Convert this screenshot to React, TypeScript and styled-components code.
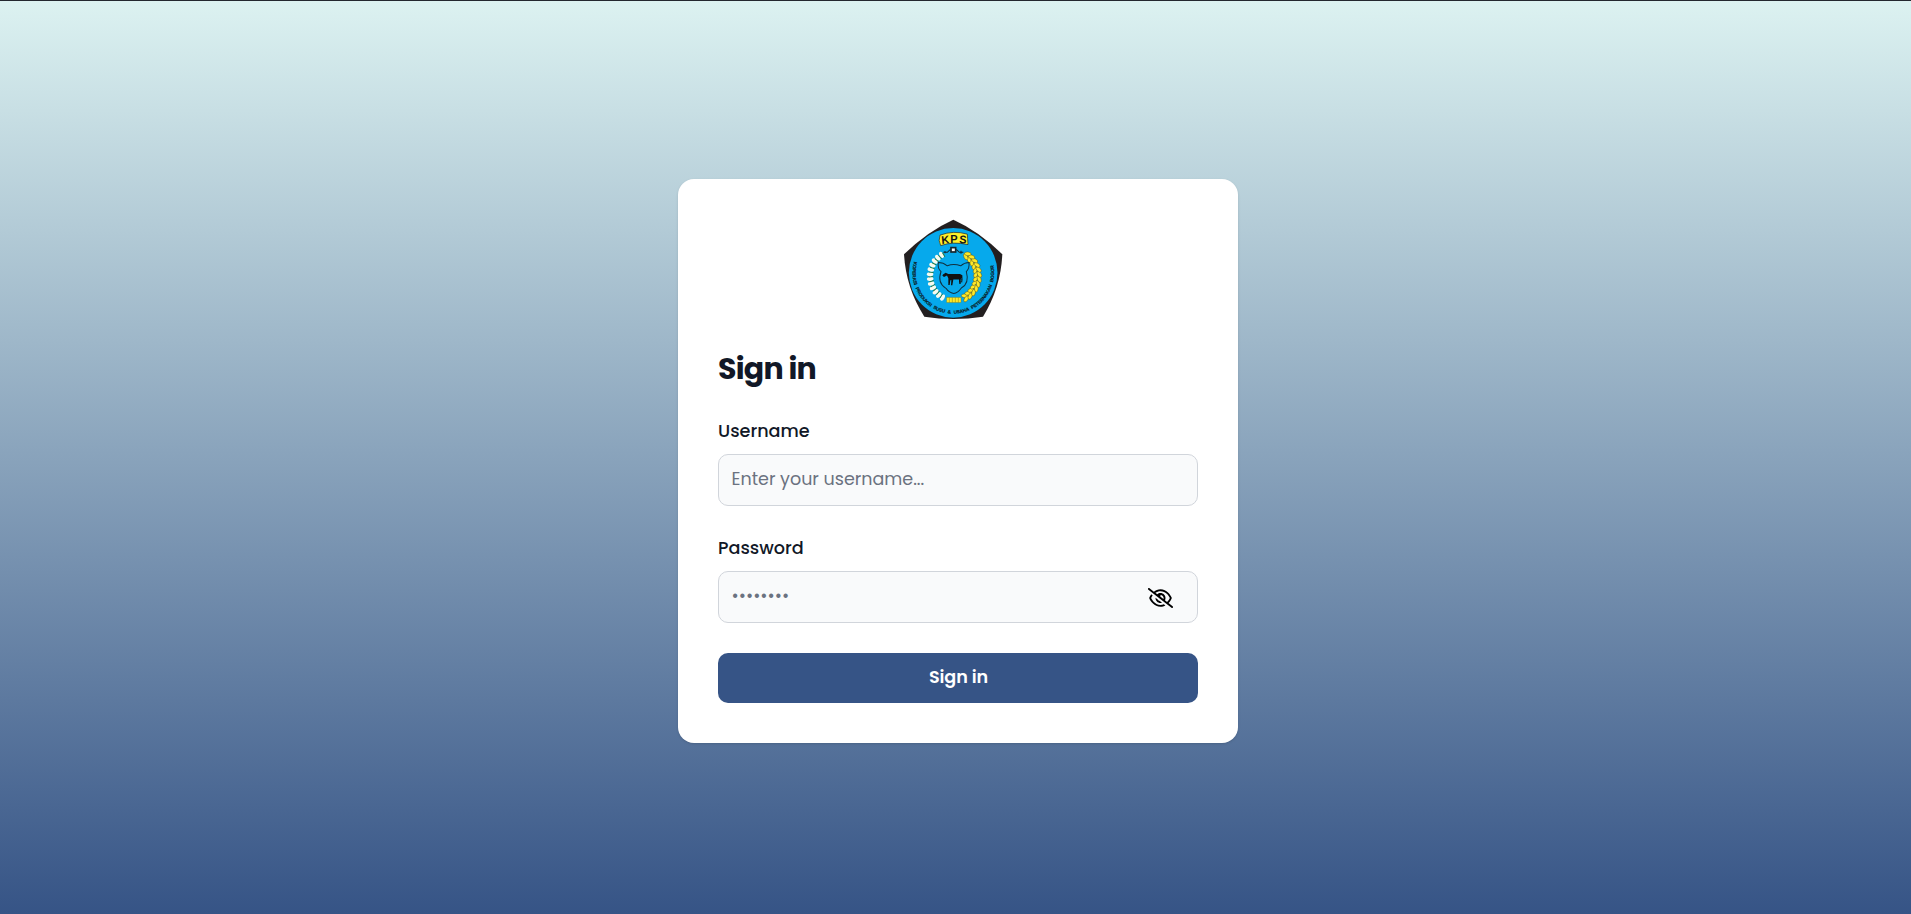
import React, { useState } from "react";
import styled, { createGlobalStyle } from "styled-components";
import { FaRegEyeSlash } from "react-icons/fa6";

const GlobalStyle = createGlobalStyle`
  *, *::before, *::after { box-sizing: border-box; }
  body {
    margin: 0;
    font-family: Poppins, Inter, sans-serif;
    font-size: 17.6px;
    line-height: 24px;
    color: #111827;
  }
`;

const Page = styled.main`
  display: flex;
  flex-direction: column;
  align-items: center;
  height: 100vh;
  padding: 178px 0 0 5px;
  border-top: 1px solid #23272f;
  background: linear-gradient(to bottom, #dcf2f1, #365486) border-box;
`;

const Card = styled.section`
  display: flex;
  flex-direction: column;
  width: 560px;
  height: 564px;
  padding: 40px;
  border-radius: 16px;
  background: #fff;
  box-shadow: 0 1px 3px rgba(0, 0, 0, 0.1), 0 1px 2px -1px rgba(0, 0, 0, 0.1);
`;

const LogoRow = styled.div`
  display: flex;
  justify-content: center;
  height: 100px;
  padding-right: 10px;
`;

const Heading = styled.h1`
  margin: 32px 0 0;
  font-size: 30px;
  line-height: 36px;
  font-weight: 700;
  letter-spacing: -0.75px;
`;

const Form = styled.form`
  display: flex;
  flex-direction: column;
  margin-top: 32px;
`;

const Field = styled.div`
  display: flex;
  flex-direction: column;
  gap: 11px;
  margin-bottom: 30px;
`;

const Label = styled.label`
  height: 24px;
  font-weight: 500;
`;

const InputBox = styled.div`
  display: flex;
  align-items: center;
  height: 52px;
  padding: 0 24px 0 12.5px;
  border: 1px solid #d1d5db;
  border-radius: 10px;
  background: #f9fafb;
`;

const Input = styled.input`
  flex: 1;
  min-width: 0;
  height: 28px;
  padding: 0 0 2px;
  border: 0;
  outline: 0;
  background: transparent;
  font: inherit;
  font-size: 17.5px;
  color: #111827;
  &::placeholder { color: #6b7280; opacity: 1; }
`;

const Toggle = styled.button`
  display: flex;
  padding: 1px 0 0;
  border: 0;
  background: none;
  color: #000;
  cursor: pointer;
`;

const EyeIcon = styled(FaRegEyeSlash)`
  width: 25px;
  height: 20px;
`;

const Submit = styled.button`
  height: 50px;
  padding: 0 0 2px 1px;
  border: 0;
  border-radius: 10px;
  background: #365486;
  color: #fff;
  font: inherit;
  font-weight: 600;
  letter-spacing: -0.1px;
  cursor: pointer;
`;

const leaves = Array.from({ length: 12 }, (_, i) => i);

function Logo() {
  return (
    <svg width="100" height="101" viewBox="24 24 300 300" preserveAspectRatio="none" role="img" aria-label="KPS">
      <defs>
        <path id="motto" d="M57 150A122.500 122.500 0 1 0 293 150" />
      </defs>
      <path d="M175 26Q252 60 322 129Q317 230 264 314Q175 328 88 314Q33 230 27 129Q98 60 175 26Z" fill="#231f20" />
      <circle cx="174.500" cy="184" r="133" fill="#06a9ec" />
      <path d="M135 72Q175 57 217 69L219 100Q175 90 137 103Q129 88 135 72Z" fill="#fff02a" stroke="#231f20" strokeWidth="2" />
      <text x="140 166 192" y="98 94 95" rotate="-6 0 5" fontFamily="Liberation Sans, sans-serif" fontWeight="700" fontSize="33" fill="#151515">KPS</text>
      <g fill="none" stroke="#17252b" strokeWidth="3">
        <path d="M145 123h12l8-8h20l8 8h12M150 119v7M198 118v9" />
        <rect x="168" y="109" width="14" height="13" fill="#fff" strokeWidth="5" />
      </g>
      {leaves.map((i) => {
        const deg = 118 + i * 11;
        const a = (deg * Math.PI) / 180;
        const cx = 176 + Math.cos(a) * 71;
        const cy = 193 + Math.sin(a) * 73;
        return (
          <g key={i} transform={`rotate(${deg} ${cx} ${cy})`}>
            <ellipse cx={cx} cy={cy} rx="10" ry="6" fill="#f7fbef" />
            <path d={`M${cx - 10} ${cy + 6}h14`} stroke="#237b42" strokeWidth="3" />
          </g>
        );
      })}
      {leaves.map((i) => {
        const deg = 63 - i * 10.7;
        const a = (deg * Math.PI) / 180;
        const cx = 176 + Math.cos(a) * 72;
        const cy = 193 + Math.sin(a) * 73;
        return (
          <g key={i} transform={`rotate(${deg - 90} ${cx} ${cy})`} fill="#ffe928" stroke="#3c3b16" strokeWidth="1.200">
            <ellipse cx={cx} cy={cy - 6} rx="10" ry="5.500" transform={`rotate(30 ${cx} ${cy})`} />
            <ellipse cx={cx} cy={cy + 6} rx="10" ry="5.500" transform={`rotate(-30 ${cx} ${cy})`} />
          </g>
        );
      })}
      <path d="M155 257h43v15h-43z" fill="#ffe928" stroke="#736a17" />
      <path d="M163 257v15M172 257v15M181 257v15M190 257v15" stroke="#8a7d16" strokeWidth="1.500" />
      <path d="M130 153Q145 153 157 163Q176 156 197 163Q208 153 222 153Q224 171 214 180Q224 215 199 229Q189 244 176 245Q161 243 153 230Q126 214 138 180Q127 171 130 153Z" fill="none" stroke="#10303f" strokeWidth="3" />
      <path d="M144 189l8-5 8 3h35l7 4 1 24-3-16-3 4v14h-4l-1-13h-17l-3 17h-4l1-16-3 1-2 14h-4v-20l-4-8-9 4-5-4z" fill="#111" />
      <rect x="193" y="202" width="7" height="9" fill="none" stroke="#111" strokeWidth="2" />
      <text fontFamily="Liberation Sans, sans-serif" fontWeight="700" fontSize="14" wordSpacing="5" fill="#0b1a22" stroke="#0b1a22" strokeWidth="0.500" textLength="440">
        <textPath href="#motto">KOPERASI PRODUKSI SUSU &amp; USAHA PETERNAKAN BOGOR</textPath>
      </text>
    </svg>
  );
}

export default function App() {
  const [visible, setVisible] = useState(false);
  return (
    <>
      <GlobalStyle />
      <Page>
        <Card>
          <LogoRow><Logo /></LogoRow>
          <Heading>Sign in</Heading>
          <Form onSubmit={(e) => e.preventDefault()}>
            <Field>
              <Label htmlFor="username">Username</Label>
              <InputBox>
                <Input id="username" placeholder="Enter your username..." />
              </InputBox>
            </Field>
            <Field>
              <Label htmlFor="password">Password</Label>
              <InputBox>
                <Input id="password" type={visible ? "text" : "password"} placeholder="••••••••" />
                <Toggle type="button" aria-label="Show password" onClick={() => setVisible(!visible)}>
                  <EyeIcon />
                </Toggle>
              </InputBox>
            </Field>
            <Submit type="submit">Sign in</Submit>
          </Form>
        </Card>
      </Page>
    </>
  );
}
